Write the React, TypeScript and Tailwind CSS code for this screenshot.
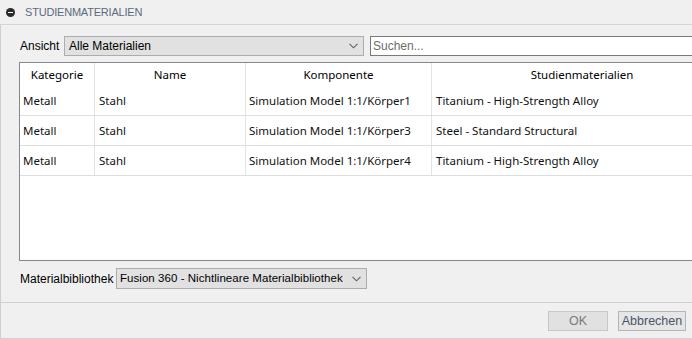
import React from "react";

const rows = [
  { cat: "Metall", name: "Stahl", comp: "Simulation Model 1:1/Körper1", mat: "Titanium - High-Strength Alloy" },
  { cat: "Metall", name: "Stahl", comp: "Simulation Model 1:1/Körper3", mat: "Steel - Standard Structural" },
  { cat: "Metall", name: "Stahl", comp: "Simulation Model 1:1/Körper4", mat: "Titanium - High-Strength Alloy" },
];

const cols = "grid grid-cols-[75px_151px_186px_300px]";

function Chevron() {
  return (
    <svg width="9" height="6" viewBox="0 0 9 6" className="shrink-0">
      <path d="M0.5 0.8 L4.5 4.8 L8.5 0.8" fill="none" stroke="#606060" strokeWidth="1.1" />
    </svg>
  );
}

export default function App() {
  const ui = "font-['Liberation_Sans',Arial,sans-serif]";
  const seg = "font-['Noto_Sans','Open_Sans',sans-serif]";

  return (
    <div className={`w-[692px] h-[339px] bg-[#f0f0f0] flex flex-col overflow-hidden text-black ${ui}`}>
      {/* Header */}
      <div className="h-[25px] shrink-0 flex items-center pl-[6px] border-b border-[#d5d5d5]">
        <div className="w-[9px] h-[9px] rounded-full bg-[#2b2b2b] flex items-center justify-center mt-[1px]">
          <div className="w-[5px] h-[1.5px] bg-white" />
        </div>
        <span className="ml-[10px] text-[11px] tracking-[-0.2px] text-[#5d6a7c]">
          STUDIENMATERIALIEN
        </span>
      </div>

      {/* Body */}
      <div className="flex-1 flex flex-col border-l border-[#cfcfcf] overflow-hidden">
        {/* Ansicht row */}
        <div className="flex items-center mt-[11px] h-[20px] pl-[19px] whitespace-nowrap">
          <span className="text-[12px] w-[44px] shrink-0">Ansicht</span>
          <div className="w-[300px] h-[20px] shrink-0 bg-[#e1e1e1] border border-[#adadad] flex items-center justify-between pl-[4px] pr-[5px]">
            <span className="text-[12px]">Alle Materialien</span>
            <Chevron />
          </div>
          <div className="ml-[6px] w-[330px] h-[20px] shrink-0 bg-white border border-[#7a7a7a] flex items-center pl-[2px]">
            <span className="text-[12px] text-[#6d6d6d]">Suchen...</span>
          </div>
        </div>

        {/* Table */}
        <div className={`mt-[6px] ml-[18px] w-[720px] h-[199px] shrink-0 bg-white border border-[#828790] ${seg} text-[11.5px] text-[#111]`}>
          <div className={`${cols} h-[23px]`}>
            {["Kategorie", "Name", "Komponente", "Studienmaterialien"].map((h, i) => (
              <div
                key={h}
                className={`flex items-center justify-center text-black ${i < 3 ? "border-r border-[#e3e3e3]" : ""}`}
              >
                {h}
              </div>
            ))}
          </div>
          {rows.map((r, i) => (
            <div key={i} className={`${cols} h-[30px] border-b border-[#dedede]`}>
              <div className="flex items-center pl-[3px] border-r border-[#e3e3e3]">{r.cat}</div>
              <div className="flex items-center pl-[4px] border-r border-[#e3e3e3]">{r.name}</div>
              <div className="flex items-center pl-[3px] border-r border-[#e3e3e3] whitespace-nowrap">{r.comp}</div>
              <div className="flex items-center pl-[4px] whitespace-nowrap">{r.mat}</div>
            </div>
          ))}
        </div>

        {/* Materialbibliothek row */}
        <div className="flex items-center mt-[7px] h-[21px] pl-[19px] whitespace-nowrap">
          <span className="text-[12px] w-[96px] shrink-0">Materialbibliothek</span>
          <div className="w-[251px] h-[21px] shrink-0 overflow-hidden bg-[#e1e1e1] border border-[#adadad] flex items-center justify-between pl-[3px] pr-[5px]">
            <span className="text-[11.5px] tracking-[0.05px]">Fusion 360 - Nichtlineare Materialbibliothek</span>
            <Chevron />
          </div>
        </div>

        <div className="flex-1" />

        {/* Footer */}
        <div className="h-[37px] shrink-0 border-t border-b border-[#d0d0d0] flex items-center justify-end pr-[6px] gap-[10px]">
          <button className="w-[60px] h-[20px] bg-[#e1e1e1] border border-[#c8c8c8] text-[12.5px] text-[#7a7a7a]">
            OK
          </button>
          <button className="w-[68px] h-[20px] bg-[#e6e6e6] border border-[#b5b5b5] text-[12.5px] text-[#4a5566]">
            Abbrechen
          </button>
        </div>
      </div>
    </div>
  );
}
